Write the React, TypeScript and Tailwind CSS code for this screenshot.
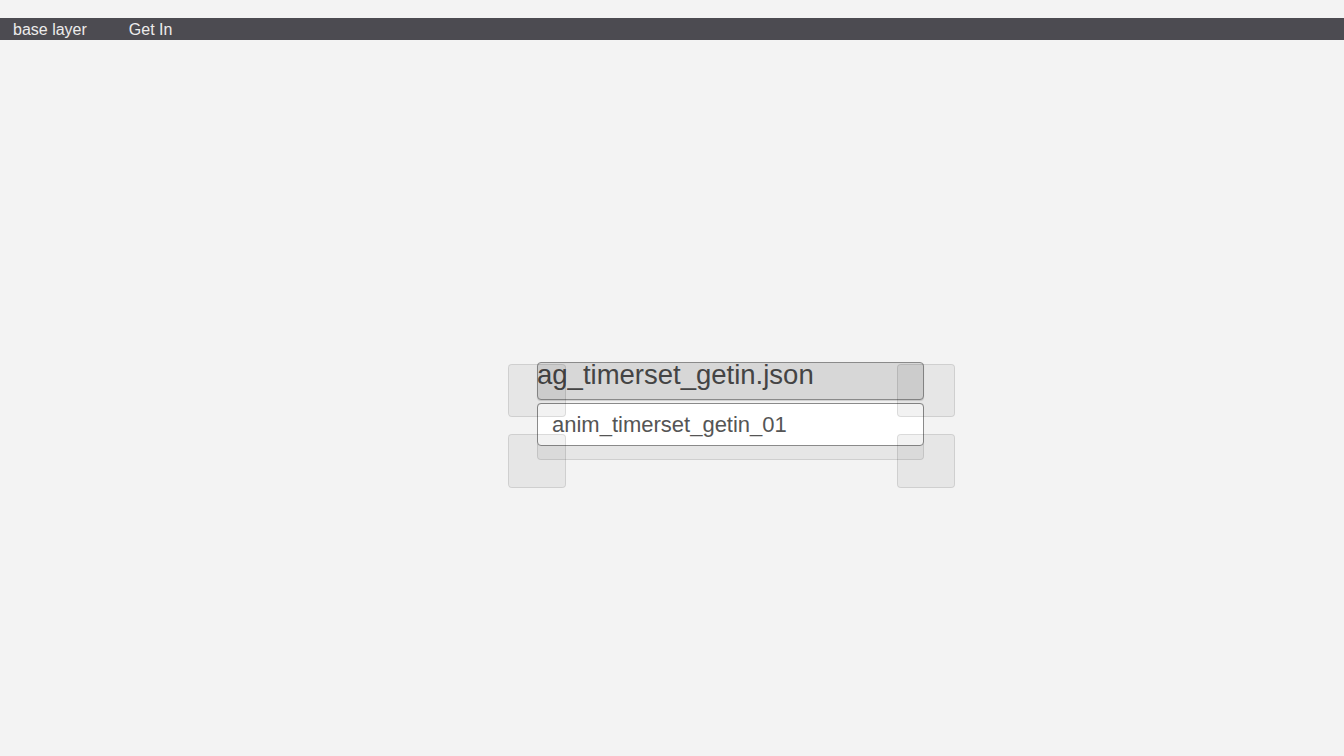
const Handle = ({ tall }: { tall?: boolean }) => (
  <div
    className={`w-[58px] rounded-[4px] border border-black/10 bg-black/[0.05] ${tall ? 'h-[54px]' : 'h-[53px]'}`}
  />
);

const HandleColumn = () => (
  <div className="flex flex-col gap-[17px]">
    <Handle />
    <Handle tall />
  </div>
);

export default function App() {
  return (
    <div
      className="relative w-[1344px] h-[756px] overflow-hidden bg-[#f3f3f3]"
      style={{ fontFamily: '"Liberation Sans", Arial, sans-serif' }}
    >
      {/* Menu bar */}
      <div className="pt-[18px]">
        <nav className="flex h-[22px] items-center bg-[#4c4b51] text-[16px] leading-[22px] text-[#ececec]">
          <span className="ml-[13px] pt-px">base layer</span>
          <span className="ml-[42px] pt-px">Get In</span>
        </nav>
      </div>

      {/* Node on the graph canvas */}
      <div className="absolute left-[508px] top-[362px] w-[447px] h-[126px]">
        <div className="ml-[29px] w-[387px] flex flex-col">
          <div className="h-[38px] rounded-[4px] border border-[#8a8a8a] bg-[#d7d7d7] shadow-[0_1px_1px_rgba(0,0,0,0.15)]">
            <div className="-ml-px -mt-[2px] text-[27.5px] leading-[27px] text-[#444] whitespace-nowrap">
              ag_timerset_getin.json
            </div>
          </div>
          <div className="mt-[3px] h-[57px] rounded-[4px] border border-black/10 bg-black/[0.05]">
            <div className="-m-px flex h-[43px] items-center rounded-[4px] border border-[#8a8a8a] bg-white pl-[14px] text-[22px] leading-none text-[#555]">
              anim_timerset_getin_01
            </div>
          </div>
        </div>

        {/* Connection handles */}
        <div className="absolute inset-0 flex justify-between pt-[2px] pointer-events-none">
          <HandleColumn />
          <HandleColumn />
        </div>
      </div>
    </div>
  );
}
